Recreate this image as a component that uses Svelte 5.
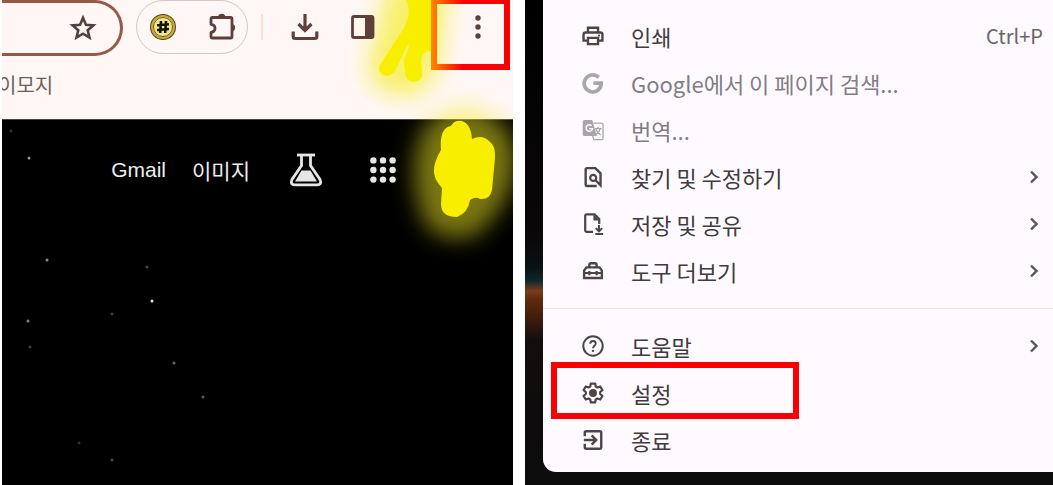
<script>
  const stars = [
    [27, 38, 0.6], [45, 140, 0.55], [145, 147, 0.3], [150, 181, 0.9], [26, 201, 0.5],
    [110, 194, 0.25], [28, 227, 0.25], [172, 243, 0.4], [201, 277, 0.35], [77, 323, 0.2],
    [110, 340, 0.3], [9, 11, 0.2]
  ];

  const groups = [
    [
      { icon: "print", label: "인쇄", shortcut: "Ctrl+P" },
      { icon: "google", label: "Google에서 이 페이지 검색...", disabled: true },
      { icon: "translate", label: "번역...", disabled: true },
      { icon: "find", label: "찾기 및 수정하기", submenu: true },
      { icon: "save", label: "저장 및 공유", submenu: true },
      { icon: "tools", label: "도구 더보기", submenu: true }
    ],
    [
      { icon: "help", label: "도움말", submenu: true },
      { icon: "settings", label: "설정", marked: true },
      { icon: "exit", label: "종료" }
    ]
  ];
</script>

{#snippet menuIcon(name)}
  <svg class="icon" viewBox="0 0 24 24" aria-hidden="true">
    {#if name == "print"}
      <g fill="none" stroke="currentColor" stroke-width="2.6">
        <path d="M6.500 8V3h11v5M6.500 17H1.700v-6.500q0-2.300 2.300-2.300h16q2.300 0 2.300 2.300V17h-4.800" />
        <path d="M6.500 14h11v6.800h-11z" />
      </g>
      <circle cx="18.600" cy="11.500" r="1.200" fill="currentColor" />
    {:else if name == "google"}
      <path d="M18.200 5.800A9.300 9.300 0 1 0 21 12.200H12.500" fill="none" stroke="currentColor" stroke-width="4" />
    {:else if name == "translate"}
      <path d="M2.500 1h8.700l5 17.500H2.500Q.8 18.500.8 16.800V2.700Q.8 1 2.500 1z" fill="currentColor" />
      <path d="M12.500 4.500h9q1.500 0 1.500 1.500v15q0 1.500-1.500 1.500h-8.500l-1.500-4" fill="none" stroke="currentColor" stroke-width="1.400" />
      <path d="M10.500 7.300a3.500 3.500 0 1 0 1 3.200H8" fill="none" stroke="#fffaff" stroke-width="1.600" />
      <path d="M14 10.500h7.500M17.500 8.500v2M20 10.500q-1.200 4-5 6.500M15.200 11.500q1.500 3.500 5.300 6" fill="none" stroke="currentColor" stroke-width="1.500" />
    {:else if name == "find"}
      <path d="M16 21.800H5.500q-1.500 0-1.500-1.500V3.800q0-1.500 1.500-1.500h9L20.200 8v13l-5.700-5.700" fill="none" stroke="currentColor" stroke-width="2.600" />
      <circle cx="12.200" cy="13" r="3.300" fill="none" stroke="currentColor" stroke-width="2.400" />
    {:else if name == "save"}
      <path d="M12 20.500H5q-1.500 0-1.500-1.500V3Q3.500 1.500 5 1.500h8.700L18.800 6.600V12" fill="none" stroke="currentColor" stroke-width="2.400" />
      <path d="M12.500 1.500v6.800h6.500z" fill="currentColor" />
      <path d="M18.500 13v6.500M15 16.500l3.500 3.500 3.500-3.500M14.500 23h8.500" fill="none" stroke="currentColor" stroke-width="2.200" />
    {:else if name == "tools"}
      <path d="M8 7.500V5.500q0-2 2-2h4q2 0 2 2v2M4.800 8h14.400l2.500 3.500v8.200H2.300v-8.200z" fill="none" stroke="currentColor" stroke-width="2.600" />
      <path d="M2.500 14.200h19M8 12v4.500M16 12v4.500" stroke="currentColor" stroke-width="2.400" />
    {:else if name == "help"}
      <circle cx="12" cy="12" r="10.600" fill="none" stroke="currentColor" stroke-width="2.200" />
      <path d="M9 9.500q0-3 3-3t3 2.700q0 1.300-1.500 2.500T12 14.500" fill="none" stroke="currentColor" stroke-width="2" />
      <circle cx="12" cy="17.300" r="1.300" fill="currentColor" />
    {:else if name == "settings"}
      <path d="M9.600 1.700h4.800l.6 3.200 1.900 1.100 3-1.100 2.400 4-2.500 2v2.200l2.500 2-2.400 4-3-1.100-1.900 1.100-.6 3.200H9.600L9 19.100 7.100 18l-3 1.100-2.400-4 2.500-2v-2.200l-2.500-2 2.400-4 3 1.100L9 4.900z" fill="none" stroke="currentColor" stroke-width="2.400" stroke-linejoin="round" />
      <circle cx="12" cy="12" r="4.300" fill="currentColor" />
    {:else}
      <path d="M3 8V4q0-1.500 1.500-1.500h15Q21 2.500 21 4v16q0 1.500-1.500 1.500h-15Q3 21.500 3 20v-4" fill="none" stroke="currentColor" stroke-width="2.600" />
      <path d="M2 12h13M10.500 7l5 5-5 5" fill="none" stroke="currentColor" stroke-width="2.600" />
    {/if}
  </svg>
{/snippet}

<main>
  <section class="browser">
    <header>
      <div class="toolbar">
        <div class="omnibox">
          <button aria-label="북마크">
            <svg width="28" height="28" viewBox="0 0 28 28">
              <path d="M14 3.800l2.900 7 7.500.6-5.700 4.900 1.800 7.300-6.500-3.900-6.500 3.900 1.800-7.300-5.700-4.900 7.500-.6z" fill="none" stroke="#51403d" stroke-width="2.600" />
            </svg>
          </button>
        </div>
        <div class="extensions">
          <button aria-label="확장 프로그램">
            <svg width="28" height="28" viewBox="0 0 28 28">
              <circle cx="14" cy="14" r="12" fill="#f1e888" stroke="#54441f" stroke-width="2" />
              <circle cx="14" cy="14" r="11" fill="none" stroke="#c9a73a" stroke-width="2" />
              <circle cx="14" cy="14" r="9.500" fill="none" stroke="#6b5a25" stroke-width="1" />
              <path d="M12 8l-.8 12M17 8l-.8 12M8 12.200l12-1M8 17l12-1" stroke="#151515" stroke-width="2.600" />
            </svg>
          </button>
          <button aria-label="확장 프로그램 관리">
            <svg width="28" height="28" viewBox="0 0 28 28">
              <path d="M5.500 4.500h18q1.500 0 1.500 1.500v17.500q0 1.500-1.500 1.500h-18q-1.500 0-1.500-1.500v-4.200q4-.3 4-4t-4-4V6q0-1.500 1.500-1.500z" fill="none" stroke="#5d403a" stroke-width="2.800" stroke-linejoin="round" />
              <path d="M11 4.500a3.700 3.700 0 0 1 7.400 0zM24.500 11a3.600 3.700 0 0 1 0 7.400z" fill="#5d403a" />
            </svg>
          </button>
        </div>
        <span class="separator"></span>
        <button class="download" aria-label="다운로드">
          <svg width="28" height="28" viewBox="0 0 28 28">
            <path d="M14 1v16M7.500 11l6.500 6.500 6.500-6.500M2.200 18.500v5q0 2 2 2h19.600q2 0 2-2v-5" fill="none" stroke="#5d403a" stroke-width="3.200" />
          </svg>
        </button>
        <button class="side-panel" aria-label="측면 패널">
          <svg width="24" height="24" viewBox="0 0 24 24">
            <rect x="1.500" y="1.500" width="20.500" height="21" rx="1.500" fill="none" stroke="#5d403a" stroke-width="2.800" />
            <path d="M14 1h8v22h-8z" fill="#5d403a" />
          </svg>
        </button>
        <button class="kebab" aria-label="Chrome 맞춤설정 및 제어">
          <svg width="8" height="26" viewBox="0 0 8 26">
            <circle cx="4" cy="4" r="2.700" fill="#5d403a" />
            <circle cx="4" cy="13" r="2.700" fill="#5d403a" />
            <circle cx="4" cy="22" r="2.700" fill="#5d403a" />
          </svg>
        </button>
      </div>
      <a class="bookmark" href="#bookmark">이모지</a>
    </header>

    <div class="page">
      <svg class="stars" aria-hidden="true">
        {#each stars as [x, y, o]}
          <circle cx={x} cy={y} r="1.500" fill="#fff" opacity={o} />
        {/each}
      </svg>
      <nav>
        <a href="#gmail">Gmail</a>
        <a href="#images">이미지</a>
        <button class="labs" aria-label="실험실">
          <svg width="34" height="34" viewBox="0 0 34 34">
            <path d="M8 2h18" stroke="#e6e6e6" stroke-width="2.800" />
            <path d="M12.500 3v9.500L3 26.500q-2.300 5.300 3 5.300h22q5.300 0 3-5.300l-9.500-14V3" fill="none" stroke="#e6e6e6" stroke-width="2.800" />
            <path d="M12.500 17.500h9L28 28.500H6z" fill="#e6e6e6" />
          </svg>
        </button>
        <button class="apps" aria-label="Google 앱">
          <svg width="26" height="26" viewBox="0 0 26 26">
            {#each [3.4, 13, 22.6] as y}
              {#each [3.4, 13, 22.6] as x}
                <circle cx={x} cy={y} r="3.200" fill="#e6e6e6" />
              {/each}
            {/each}
          </svg>
        </button>
      </nav>
    </div>

    <svg class="marker" width="170" height="270" viewBox="343 0 170 270" aria-hidden="true">
      <defs>
        <filter id="glow" filterUnits="userSpaceOnUse" x="300" y="-60" width="300" height="360">
          <feGaussianBlur stdDeviation="11" />
        </filter>
      </defs>
      <g filter="url(#glow)" fill="#f5ec20">
        <path d="M392-30L368 66Q370 94 404 96 432 94 440 60L450-30z" opacity="0.65" />
        <path d="M426 125Q460 94 494 118 524 138 512 184 500 216 474 236 430 246 420 210 406 160 426 125z" opacity="0.5" />
      </g>
      <g fill="#f7ee00">
        <path d="M405-2Q413 10 404 28L380 65Q377 74 386 76 392 76 396 69L407 46Q411 42 408 50 402 62 405 70 405 82 414 82 423 81 422 72L421 60Q422 51 431 51V-2z" />
        <path d="M441 150Q439 128 451 126 454 120 462 121 471 124 472 139 482 134 489 141 496 146 495 158L492 190Q490 200 480 199 476 196 470 200 468 213 457 217 441 217 441 204L442 188Q433 178 434 170 434 162 441 150z" />
      </g>
    </svg>
  </section>

  <section class="desktop">
    <div class="menu" role="menu">
      {#each groups as group, i}
        {#if i > 0}<hr />{/if}
        {#each group as item}
          <button class="item" class:marked={item.marked} role="menuitem" disabled={item.disabled}>
            {@render menuIcon(item.icon)}
            <span class="label">{item.label}</span>
            {#if item.shortcut}<span class="shortcut">{item.shortcut}</span>{/if}
            {#if item.submenu}
              <svg class="chevron" width="18" height="18" viewBox="0 0 18 18" aria-hidden="true">
                <path d="M6 3.500l5.500 5.500L6 14.500" fill="none" stroke="#5c5354" stroke-width="2.400" />
              </svg>
            {/if}
          </button>
        {/each}
      {/each}
    </div>
  </section>
</main>

<style>
  :global(body) {
    background: #fff;
    font-family: "Noto Sans CJK KR", sans-serif;
  }

  main {
    display: grid;
    grid-template-columns: 511fr 528fr;
    gap: 12px;
    padding-left: 2px;
    min-height: 100vh;
  }

  button {
    padding: 0;
    border: 0;
    background: none;
    font: inherit;
    color: inherit;
  }

  svg {
    display: block;
  }

  a {
    text-decoration: none;
  }

  .browser {
    position: relative;
    display: flex;
    flex-direction: column;
    overflow: hidden;
    background: #000;
  }

  header {
    background: #fff7f5;
    border-bottom: 1px solid #444;
  }

  .toolbar {
    display: flex;
    height: 70px;
    align-items: flex-start;
  }

  .omnibox {
    box-sizing: border-box;
    flex: 1;
    display: flex;
    align-items: center;
    justify-content: flex-end;
    height: 56px;
    padding-right: 23px;
    border: 3px solid #955a48;
    border-left: 0;
    border-radius: 0 28px 28px 0;
  }

  .extensions {
    box-sizing: border-box;
    display: flex;
    align-items: center;
    justify-content: space-between;
    width: 112px;
    height: 54px;
    margin-left: 13px;
    padding: 0 12px;
    border: 1px solid #d8c6c2;
    border-radius: 27px;
  }

  .separator {
    width: 2px;
    height: 26px;
    margin: 14px 0 0 13px;
    background: #fbded6;
  }

  .download {
    margin: 13px 0 0 28px;
  }

  .side-panel {
    position: relative;
    z-index: 2;
    margin: 15px 0 0 32px;
  }

  .kebab {
    position: relative;
    z-index: 2;
    box-sizing: border-box;
    display: flex;
    justify-content: center;
    width: 79px;
    height: 72px;
    margin: -2px 3px 0 56px;
    padding: 10px 0 0 14px;
    border: 6px solid;
    border-image: linear-gradient(90deg, #ff8a00, #fb0000 32px) 6;
  }

  .bookmark {
    display: block;
    height: 49px;
    margin-left: -4px;
    font-size: 20px;
    line-height: 30px;
    color: #6a5f5e;
  }

  .page {
    position: relative;
    flex: 1;
  }

  .stars {
    position: absolute;
    width: 100%;
    height: 100%;
  }

  nav {
    position: relative;
    display: flex;
    align-items: center;
    justify-content: flex-end;
    padding: 33px 117px 0 0;
  }

  nav a {
    margin-right: 26px;
    font-family: "Liberation Sans", "Noto Sans CJK KR", sans-serif;
    font-size: 21px;
    color: #eee;
  }

  .labs {
    margin: 0 47px 0 13px;
  }

  .marker {
    position: absolute;
    top: 0;
    right: 0;
    z-index: 1;
    pointer-events: none;
  }

  .desktop {
    padding-left: 18px;
    background: linear-gradient(#000 0, #0a0808 240px, #0a1214 268px, #10282c 281px, #7a3d1c 291px, #5e2a0c 300px, #3a1c0c 320px, #120e0d 340px, #0c0c0c);
  }

  .menu {
    padding: 12px 0 9px;
    border-radius: 0 0 0 13px;
    background: #fffaff;
  }

  hr {
    height: 1px;
    margin: 14px 0 13px;
    border: 0;
    background: #f9dfd9;
  }

  .item {
    position: relative;
    display: flex;
    align-items: center;
    width: 100%;
    height: 47px;
    padding: 0 10px 0 39px;
    font-size: 22px;
    line-height: 30px;
    text-align: left;
    color: #403b3e;
  }

  .item:disabled {
    color: #827c84;
  }

  .icon {
    width: 22px;
    height: 22px;
    margin-right: 27px;
    color: #4f4444;
  }

  .item:disabled .icon {
    color: #aaa5a8;
  }

  .label {
    flex: 1;
    white-space: nowrap;
  }

  .shortcut {
    font-size: 20px;
    color: #6b6568;
  }

  .marked::after {
    content: "";
    position: absolute;
    top: -7px;
    left: 8px;
    box-sizing: border-box;
    width: 248px;
    height: 57px;
    border: 6px solid #fb0000;
  }
</style>
